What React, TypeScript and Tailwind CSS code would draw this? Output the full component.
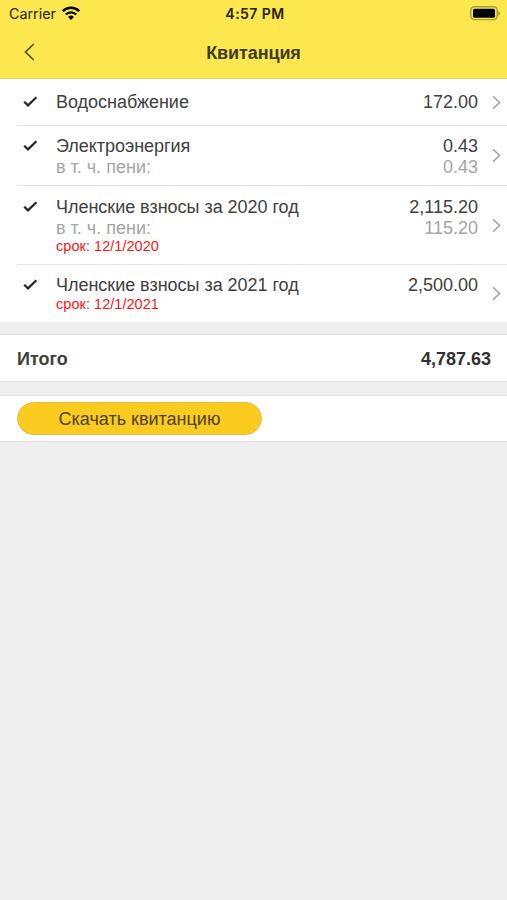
type Item = {
  title: string;
  amount: string;
  penalty?: string;
  due?: string;
  className: string;
};

const items: Item[] = [
  { title: "Водоснабжение", amount: "172.00", className: "h-[47px] pt-[13px]" },
  {
    title: "Электроэнергия",
    amount: "0.43",
    penalty: "0.43",
    className: "h-[60px] pt-[10px]",
  },
  {
    title: "Членские взносы за 2020 год",
    amount: "2,115.20",
    penalty: "115.20",
    due: "12/1/2020",
    className: "h-[79px] pt-[11px]",
  },
  {
    title: "Членские взносы за 2021 год",
    amount: "2,500.00",
    due: "12/1/2021",
    className: "h-[57px] pt-[10px]",
  },
];

function StatusBar() {
  return (
    <div className="flex h-7 items-center leading-none text-[#25230f]">
      <div className="flex flex-1 items-center gap-[6px] pl-[9px]">
        <span className="font-['Inter',sans-serif] text-[14.3px]">Carrier</span>
        <svg width="18" height="14" viewBox="0 0 18 14" fill="none" className="-mt-[2px]">
          <path d="M.8 5.2a11.6 11.6 0 0 1 16.4 0" stroke="#000" strokeWidth="2.5" />
          <path d="M3.8 8.5a7.3 7.3 0 0 1 10.4 0" stroke="#000" strokeWidth="2.3" />
          <path d="M9 13.9 6.1 11a4.1 4.1 0 0 1 5.8 0Z" fill="#000" />
        </svg>
      </div>
      <span className="font-['Inter',sans-serif] text-[14px] font-semibold tracking-[0.45px]">
        4:57 PM
      </span>
      <div className="flex flex-1 justify-end pr-[6px]">
        <svg width="31" height="15" viewBox="0 0 31 15" fill="none" className="-mt-px">
          <rect x=".8" y=".8" width="26.4" height="12.8" rx="3.5" stroke="#a99b3a" strokeWidth="1.4" />
          <rect x="3" y="2.8" width="22" height="9" rx="1.5" fill="#000" />
          <path d="M28.2 5c2.4.8 2.4 3.8 0 4.6Z" fill="#a99b3a" />
        </svg>
      </div>
    </div>
  );
}

function Check() {
  return (
    <svg width="15" height="12" viewBox="0 0 15 12" fill="none" className="mt-[3px]">
      <path d="M1.2 6.7 5 10.4 13.4 2.2" stroke="#262626" strokeWidth="2.2" />
    </svg>
  );
}

function Chevron() {
  return (
    <svg width="9" height="15" viewBox="0 0 9 15" fill="none">
      <path d="M1 1.2 7.6 7.5 1 13.8" stroke="#a0a0a0" strokeWidth="1.5" />
    </svg>
  );
}

function Row({ item, last }: { item: Item; last: boolean }) {
  const hasDetails = item.penalty || item.due;

  return (
    <div
      className={`ml-[17px] flex ${item.className} ${last ? "" : "border-b border-[#e4e4e4]"}`}
    >
      <div className="w-[39px] pl-[6px]">
        <Check />
      </div>
      <div className="flex-1">
        <p className="tracking-[-0.03px]">{item.title}</p>
        {item.penalty && <p className="-mb-px text-[#a5a5a5]">в т. ч. пени:</p>}
        {item.due && (
          <p className="text-[14.5px] leading-[17px] tracking-[0.04px] text-[#ff1414]">
            срок: {item.due}
          </p>
        )}
      </div>
      <div className="text-right">
        <p>{item.amount}</p>
        {item.penalty && <p className="text-[#a5a5a5]">{item.penalty}</p>}
      </div>
      <div
        className={`flex w-[29px] items-center justify-end pr-[6px] ${hasDetails ? "-mt-[10px]" : "-mt-3"}`}
      >
        <Chevron />
      </div>
    </div>
  );
}

export default function App() {
  return (
    <div className="min-h-screen bg-[#efefef] font-['Liberation_Sans',sans-serif] text-[18px] leading-[21px] text-[#404040]">
      <header className="h-[79px] border-b border-[#e3d370] bg-[#fde74f]">
        <StatusBar />
        <div className="grid h-[50px] grid-cols-[1fr_auto_1fr] items-center">
          <div className="pl-6">
            <svg width="11" height="18" viewBox="0 0 11 18" fill="none" className="-mt-[3px]">
              <path d="M9.7 1 1.5 9l8.2 8" stroke="#4b4724" strokeWidth="1.6" />
            </svg>
          </div>
          <h1 className="text-[18px] font-bold tracking-[-0.1px] text-[#3d3b29]">Квитанция</h1>
          <div />
        </div>
      </header>

      <main>
        <section className="bg-white">
          {items.map((item, i) => (
            <Row key={item.title} item={item} last={i === items.length - 1} />
          ))}
        </section>

        <section className="mt-3 flex h-12 items-center justify-between border-y border-[#e2e2e2] bg-white pl-[17px] pr-4 pt-[2px] font-bold">
          <span>Итого</span>
          <span className="text-[#303030]">4,787.63</span>
        </section>

        <section className="mt-[13px] flex h-[47px] items-center border-y border-[#e2e2e2] bg-white pl-[17px]">
          <button className="h-[33px] w-[245px] rounded-full border border-[#dcbb4d] bg-[#fbcb1f] pt-[2px] text-[#4d431c]">
            Скачать квитанцию
          </button>
        </section>
      </main>
    </div>
  );
}
